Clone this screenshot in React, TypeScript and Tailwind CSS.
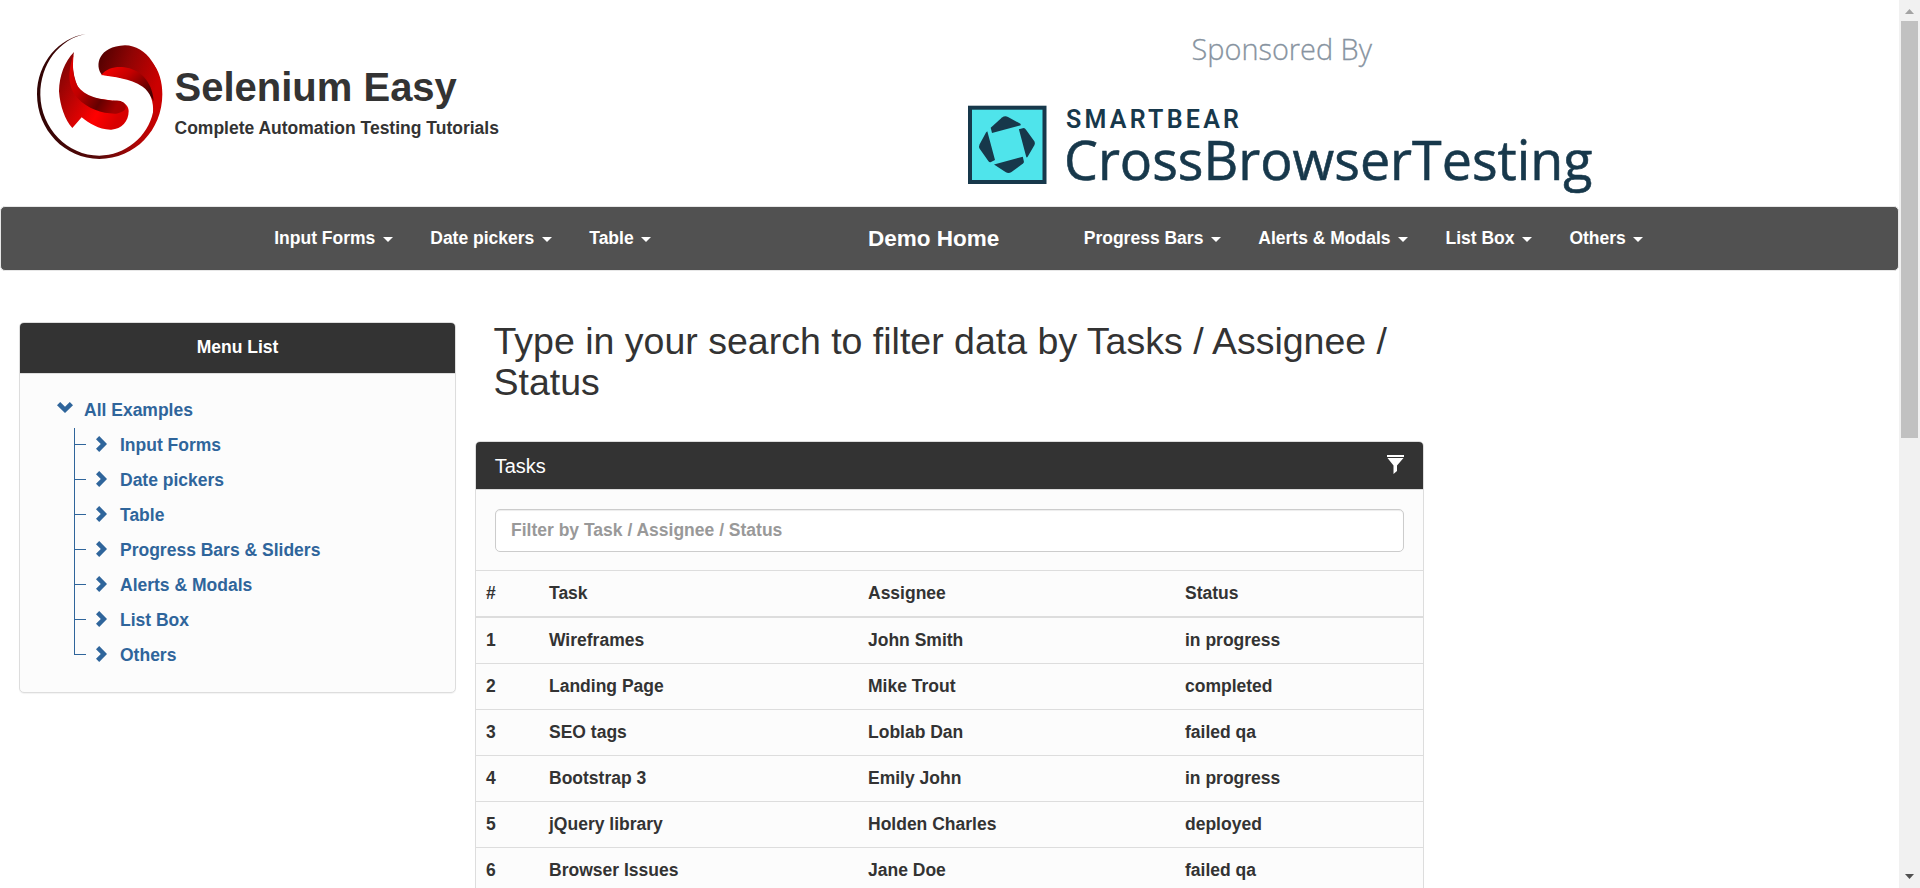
import React from "react";

const leftNav = ["Input Forms", "Date pickers", "Table"];
const rightNav = ["Progress Bars", "Alerts & Modals", "List Box", "Others"];
const tree = ["Input Forms", "Date pickers", "Table", "Progress Bars & Sliders", "Alerts & Modals", "List Box", "Others"];
const rows = [
  ["1", "Wireframes", "John Smith", "in progress"],
  ["2", "Landing Page", "Mike Trout", "completed"],
  ["3", "SEO tags", "Loblab Dan", "failed qa"],
  ["4", "Bootstrap 3", "Emily John", "in progress"],
  ["5", "jQuery library", "Holden Charles", "deployed"],
  ["6", "Browser Issues", "Jane Doe", "failed qa"],
];

function SeleniumLogo() {
  return (
    <svg className="h-[140px] w-[140px] shrink-0" viewBox="0 0 420 420">
      <defs>
        <linearGradient id="ring" x1="0" y1="0" x2="1" y2="0">
          <stop offset="0" stopColor="#300404" />
          <stop offset="0.5" stopColor="#5a0808" />
          <stop offset="0.8" stopColor="#b00505" />
          <stop offset="1" stopColor="#cc0000" />
        </linearGradient>
        <linearGradient id="head" x1="0" y1="0" x2="1" y2="0.4">
          <stop offset="0" stopColor="#4a0000" />
          <stop offset="0.5" stopColor="#900404" />
          <stop offset="1" stopColor="#cc0000" />
        </linearGradient>
        <linearGradient id="fold" x1="0" y1="0" x2="1" y2="0.7">
          <stop offset="0" stopColor="#ff0000" />
          <stop offset="0.45" stopColor="#c40000" />
          <stop offset="1" stopColor="#4a0000" />
        </linearGradient>
        <linearGradient id="belly" x1="0" y1="0" x2="1" y2="0.6">
          <stop offset="0" stopColor="#6d0505" />
          <stop offset="0.45" stopColor="#c40303" />
          <stop offset="0.75" stopColor="#ff0000" />
          <stop offset="1" stopColor="#d80000" />
        </linearGradient>
        <linearGradient id="ribbon" x1="0" y1="0" x2="1" y2="0.6">
          <stop offset="0" stopColor="#e80000" />
          <stop offset="0.4" stopColor="#c00000" />
          <stop offset="0.75" stopColor="#650000" />
          <stop offset="1" stopColor="#a50000" />
        </linearGradient>
      </defs>
      <path
        fill="url(#ring)"
        d="M167 27C88 38 21 112 21 208C21 315 105 402 208 402C315 402 397 315 397 208C397 170 387 136 366 112L368 215C370 233 371 245 369 262C354 335 285 392 208 392C112 392 33 310 31 210C30 118 88 42 167 27Z"
      />
      <path
        fill="url(#head)"
        d="M216 150C193 122 205 64 285 61C350 62 396 132 396 215C388 248 380 270 369 260C369 190 300 158 216 150Z"
      />
      <path
        fill="url(#fold)"
        d="M214 150C230 130 256 124 283 127C325 132 367 165 371 228C350 187 300 164 256 158C235 155 222 154 214 150Z"
      />
      <path
        fill="#fff"
        d="M214 150C250 156 300 160 338 185C362 202 371 230 369 262L345 262L300 220Z"
      />
      <path
        fill="url(#belly)"
        d="M132 81C104 110 88 151 87 199C90 243 105 285 127 309L155 277C178 295 207 315 244 314C275 312 296 289 296 258C296 246 287 232 270 230L160 214C135 180 121 125 132 81Z"
      />
      <path
        fill="url(#ribbon)"
        d="M131 88C116 130 109 185 143 220C174 252 218 267 258 266C276 263 290 255 287 243C283 229 270 226 247 227C190 223 150 205 137 172C126 140 129 110 131 88Z"
      />
    </svg>
  );
}

function SponsorBanner() {
  return (
    <svg className="h-[205px] w-[660px] shrink-0" viewBox="960 0 660 205">
      <text x="1191.5" y="60" fontSize="30" fontWeight="300" fill="#8793a0" stroke="#8793a0" strokeWidth="0.3" textLength="180.5" lengthAdjust="spacingAndGlyphs" className="font-['Open_Sans',sans-serif]">
        Sponsored By
      </text>
      <rect x="970" y="107.7" width="74.5" height="74.3" fill="#4fe4eb" stroke="#17384b" strokeWidth="4" />
      <g fill="#17384b">
        <path d="M990.7 127.7L1002 117.5Q1005 115.5 1008 117L1020 123.5Q1021.5 124.8 1020 125.5L992 133Z" />
        <path d="M1018.9 129.3L1023.7 128Q1025 128.2 1026 129.8L1034.5 141.5Q1035.3 143.3 1034.5 145L1027.5 157Q1026.7 158 1026.2 156.7Z" />
        <path d="M1022.8 156.7L1023.9 161.5Q1024 162.7 1023 163.5L1011.5 172Q1008.5 173.8 1005.5 172L994 164.5Z" />
        <path d="M987.3 131.3L995 160L990.5 162.2Q989 162.3 988.3 161L979.5 148.5Q978.6 146.7 979.5 144.5L986 132.5Z" />
      </g>
      <text x="1066" y="127.7" fontSize="25" fontWeight="600" fill="#17384b" textLength="173" lengthAdjust="spacing" className="font-['Roboto',sans-serif]">
        SMARTBEAR
      </text>
      <text x="1064" y="180" fontSize="54" fontWeight="400" fill="#17384b" stroke="#17384b" strokeWidth="0.6" textLength="528.5" lengthAdjust="spacingAndGlyphs" className="font-['Open_Sans',sans-serif]">
        CrossBrowserTesting
      </text>
    </svg>
  );
}

function NavItem({ label }: { label: string }) {
  return (
    <a className="flex items-center px-[18.75px] whitespace-nowrap">
      {label}
      <span className="mt-[2px] ml-[7.4px] border-x-5 border-t-5 border-x-transparent border-t-white" />
    </a>
  );
}

function Scrollbar() {
  return (
    <div className="flex w-[21px] shrink-0 flex-col items-center bg-[#f1f1f1]">
      <svg className="h-[21px] w-[21px] shrink-0" viewBox="0 0 21 21">
        <path d="M6 14L10.5 9L15 14Z" fill="#a3a3a3" />
      </svg>
      <div className="h-[417px] w-[17px] bg-[#c1c1c1]" />
      <svg className="mt-auto h-[21px] w-[21px] shrink-0" viewBox="0 0 21 21">
        <path d="M6 7L10.5 12L15 7Z" fill="#505050" />
      </svg>
    </div>
  );
}

export default function App() {
  return (
    <div className="flex h-[888px] w-[1920px] overflow-hidden bg-white font-['Liberation_Sans',Arial,sans-serif] text-[17.5px] leading-[25px] font-bold text-[#333]">
      <div className="w-[1899px] shrink-0">
        <header className="flex h-[206px] items-start">
          <div className="flex w-[960px] pt-[25px] pl-[30px]">
            <SeleniumLogo />
            <div className="pt-[42px] pl-[4.5px]">
              <h1 className="text-[40px] leading-[41px]">Selenium Easy</h1>
              <p className="mt-[8px]">Complete Automation Testing Tutorials</p>
            </div>
          </div>
          <SponsorBanner />
        </header>

        <nav className="flex h-[65px] rounded-[5px] border border-[#e7e7e7] bg-[#515151] pl-[254.5px] text-white">
          <div className="flex w-[594.5px]">
            {leftNav.map((n) => <NavItem key={n} label={n} />)}
          </div>
          <a className="flex w-[215px] items-center pl-[18px] text-[22.5px]">Demo Home</a>
          <div className="flex">
            {rightNav.map((n) => <NavItem key={n} label={n} />)}
          </div>
        </nav>

        <div className="flex items-start pl-[19px]">
          <aside className="mt-[51px] h-[371px] w-[437px] shrink-0 rounded-[5px] border border-[#ddd] bg-[#fcfcfc] shadow-[0_1px_1px_rgba(0,0,0,0.05)]">
            <div className="h-[51px] rounded-t-[4px] border-b border-[#ddd] bg-[#333] pt-[12px] text-center text-white">Menu List</div>
            <div className="pt-[23px] pl-[37px] text-[#2f659b]">
              <div className="flex h-[25px] items-center pt-px">
                <svg className="mb-[5px] h-[11px] w-[16px]" viewBox="0 0 16 11">
                  <path d="M0 3.2L3.2 0L8 4.8L12.8 0L16 3.2L8 11Z" fill="currentColor" />
                </svg>
                <span className="ml-[11px]">All Examples</span>
              </div>
              <ul className="mt-[6px] ml-[17px]">
                {tree.map((t, i) => (
                  <li key={t} className="flex h-[35px]">
                    <div className={i === tree.length - 1 ? "h-[17px] w-px bg-current" : "h-[35px] w-px bg-current"} />
                    <div className="mt-[16px] h-px w-[11px] bg-current" />
                    <svg className="mt-[8px] ml-[10px] h-[16px] w-[11px]" viewBox="0 0 11 16">
                      <path d="M3.2 0L0 3.2L4.8 8L0 12.8L3.2 16L11 8Z" fill="currentColor" />
                    </svg>
                    <span className="mt-[5px] ml-[13px]">{t}</span>
                  </li>
                ))}
              </ul>
            </div>
          </aside>

          <main className="ml-[19px] w-[949px]">
            <h2 className="mt-[50px] pl-[18.5px] text-[37.5px] leading-[41.25px] font-normal">
              Type in your search to filter data by Tasks / Assignee / Status
            </h2>
            <section className="mt-[37.5px] rounded-[5px] border border-[#ddd] bg-[#fcfcfc]">
              <div className="flex h-[48px] items-center rounded-t-[4px] border-b border-[#ddd] bg-[#333] pr-[19.5px] pl-[18.75px] text-[20px] leading-[22px] font-normal text-white">
                Tasks
                <svg className="mb-[2px] ml-auto h-[19px] w-[17px]" viewBox="0 0 17 19">
                  <path d="M0 0H17V2H0ZM0.5 3H16.5L10 10.5V16L6.5 19V10.5Z" fill="white" />
                </svg>
              </div>
              <div className="h-[80px] px-[19px] pt-[19px]">
                <input
                  className="block h-[43px] w-full rounded-[5px] border border-[#ccc] bg-white px-[15px] pb-px font-bold shadow-[inset_0_1px_1px_rgba(0,0,0,0.075)] outline-none placeholder:text-[#999] placeholder:opacity-100"
                  placeholder="Filter by Task / Assignee / Status"
                />
              </div>
              <div className="grid h-[48px] grid-cols-[63px_319px_317px_1fr] border-t border-b-2 border-[#ddd] pt-[10px] pl-[10px]">
                <span>#</span>
                <span>Task</span>
                <span>Assignee</span>
                <span>Status</span>
              </div>
              {rows.map((r) => (
                <div key={r[0]} className="grid h-[46px] grid-cols-[63px_319px_317px_1fr] border-b border-[#ddd] pt-[10px] pl-[10px]">
                  {r.map((c, i) => <span key={i}>{c}</span>)}
                </div>
              ))}
            </section>
          </main>
        </div>
      </div>
      <Scrollbar />
    </div>
  );
}
